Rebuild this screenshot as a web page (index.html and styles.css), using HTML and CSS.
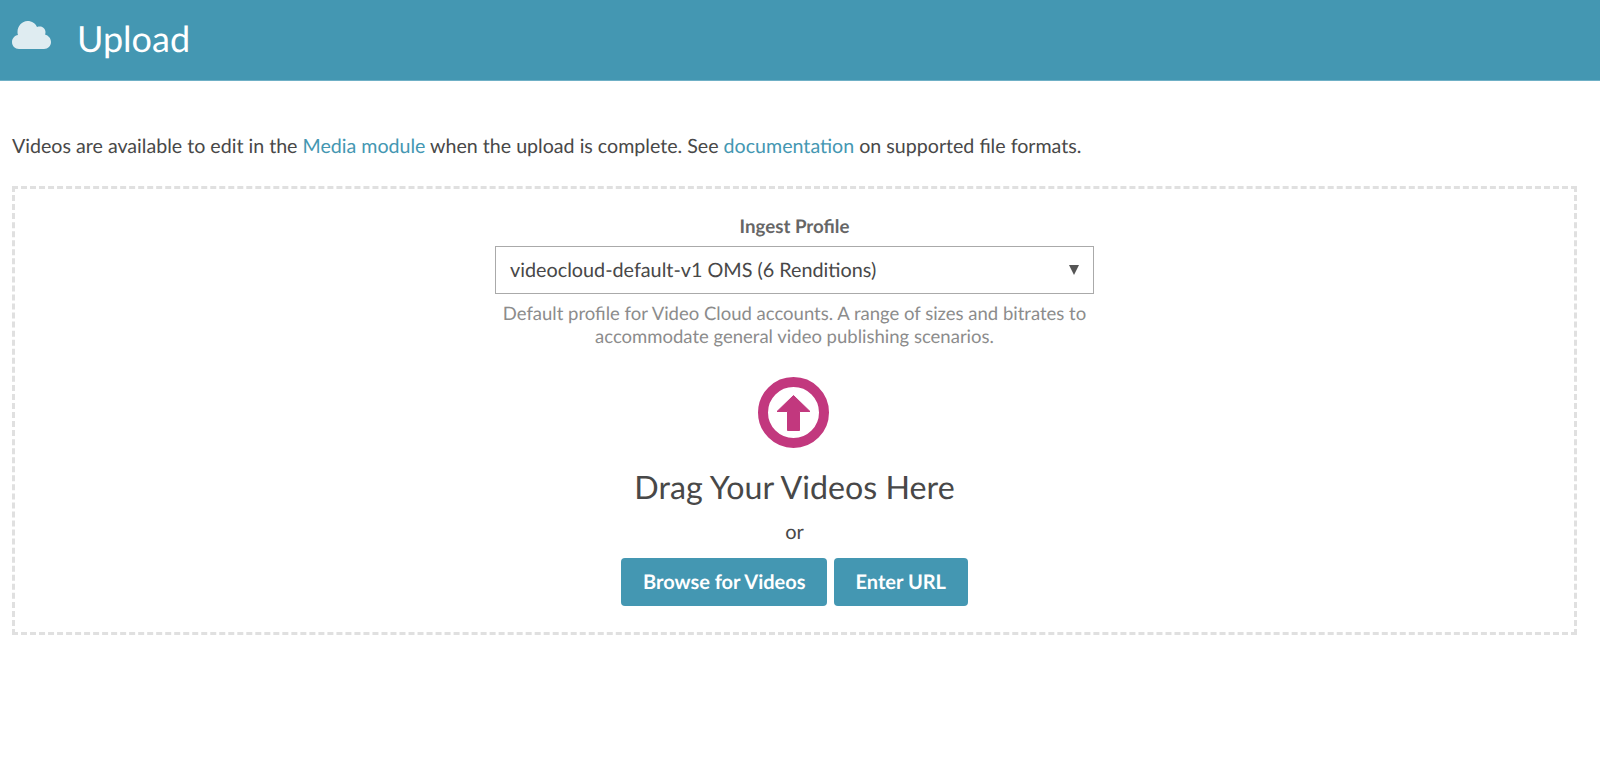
FILE: index.html
```html
<!DOCTYPE html>
<html lang="en">
<head>
<meta charset="utf-8">
<title>Upload</title>
<link rel="stylesheet" href="styles.css">
</head>
<body>
<header class="topbar">
  <svg class="cloud" viewBox="0 0 39 28" aria-hidden="true"><path d="M7 28C3 28 0 25 0 21C0 17.500 2.500 14.500 6 14C5.500 13 5.500 12 5.500 11C5.500 5 10 0 15.500 0C20 0 23.500 2.500 25 6C26 5.500 27 5.500 28 5.500C31 5.500 33.500 8 33.500 11C33.500 12 33.300 13 33 13.500C36.500 14.500 39 17.500 39 21C39 25 36 28 32 28Z"/></svg>
  <h1 class="title">Upload</h1>
</header>
<main class="content">
  <p class="intro">Videos are available to edit in the <a href="#">Media module</a> when the upload is complete. See <a href="#">documentation</a> on supported file formats.</p>
  <section class="dropzone">
    <label class="profile-label">Ingest Profile</label>
    <div class="select"><span>videocloud-default-v1 OMS (6 Renditions)</span><i class="caret"></i></div>
    <p class="hint">Default profile for Video Cloud accounts. A range of sizes and bitrates to accommodate general video publishing scenarios.</p>
    <svg class="upload-icon" viewBox="0 0 71 71" aria-hidden="true"><circle cx="35.500" cy="35.500" r="30.500" class="ring"/><path class="arrow" d="M35.500 18.500L52 34.500H41.500V53.500H29.500V34.500H19Z"/></svg>
    <h2 class="drag">Drag Your Videos Here</h2>
    <p class="or">or</p>
    <div class="actions"><button class="btn">Browse for Videos</button><button class="btn">Enter URL</button></div>
  </section>
</main>
</body>
</html>
```
FILE: styles.css
```css
* { box-sizing: border-box; }
body { margin: 0; background: #fff; color: #484848; font-family: Lato, sans-serif; text-rendering: geometricPrecision; }
.topbar { height: 81px; background: #4497b2; border-bottom: 1px solid #6fb0c6; display: flex; align-items: center; padding: 0 0 4px 12px; gap: 26px; }
.cloud { width: 39px; height: 28px; fill: #dfecf1; margin-top: -6px; }
.title { margin: 0; color: #fff; font-size: 36px; font-weight: 400; line-height: 44px; }
.content { padding: 54px 23px 0 12px; }
.intro { margin: 0 0 27px; font-size: 19.640px; line-height: 24px; }
.intro a { color: #4497b2; text-decoration: none; }
.dropzone { height: 449px; border: 3px dashed #e0e0e0; display: flex; flex-direction: column; align-items: center; padding-top: 26px; }
.profile-label { font-size: 18.700px; font-weight: 700; line-height: 22px; color: #666; }
.select { width: 599px; height: 48px; margin-top: 9px; border: 1px solid #aaa; display: flex; align-items: center; justify-content: space-between; padding: 0 14px; font-size: 19.800px; }
.caret { border-left: 5px solid transparent; border-right: 5px solid transparent; border-top: 10px solid #555; }
.hint { width: 600px; margin: 8px 0 0; text-align: center; font-size: 18.500px; line-height: 23px; color: #8c8c8c; }
.upload-icon { width: 71px; height: 71px; margin: 29px 2px 0 0; }
.ring { fill: #fff; stroke: #c2387e; stroke-width: 10; }
.arrow { fill: #c2387e; stroke: #c2387e; stroke-width: 1; stroke-linejoin: round; }
.drag { margin: 19px 0 0; font-size: 32.200px; font-weight: 400; line-height: 40px; }
.or { margin: 13px 0 0; font-size: 20px; line-height: 24px; }
.actions { display: flex; gap: 7px; margin-top: 14px; }
.btn { height: 48px; padding: 0 21.500px; border: 0; border-radius: 4px; background: #4497b2; color: #fff; font: 700 20px Lato, sans-serif; text-rendering: geometricPrecision; }
```
